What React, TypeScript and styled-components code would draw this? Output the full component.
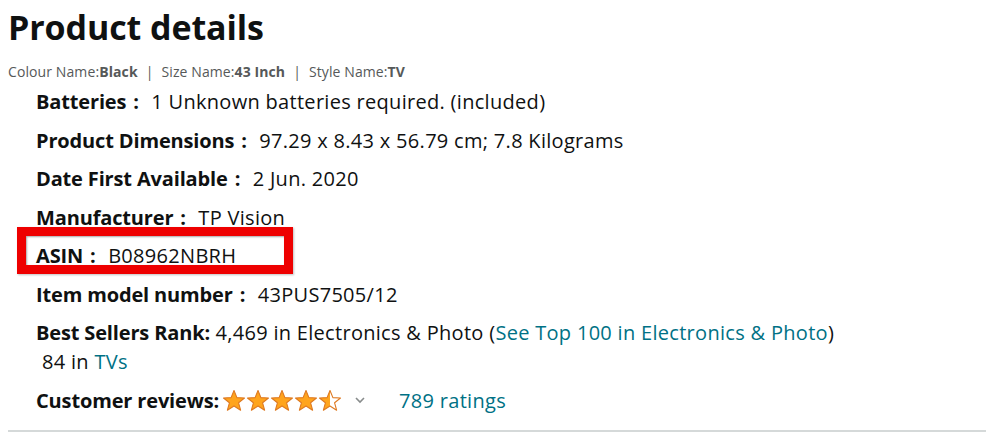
import React from "react";
import styled, { createGlobalStyle } from "styled-components";

const Global = createGlobalStyle`
  html, body { margin: 0; padding: 0; background: #fff; }
  body { font-family: "Open Sans", "Noto Sans", Arial, sans-serif; color: #0f1111; }
`;

const Page = styled.div`
  padding: 4px 0 0 8px;
  display: flex;
  flex-direction: column;
`;

const Title = styled.h2`
  margin: 0;
  font-size: 34px;
  font-weight: 700;
  line-height: 47px;
  color: #0f1111;
  letter-spacing: -0.1px;
`;

const Variants = styled.div`
  margin-top: 12px;
  font-size: 14px;
  color: #565959;
  line-height: 18px;
  letter-spacing: 0.1px;
`;

const Strong = styled.b`
  font-weight: 700;
`;

const Sep = styled.span`
  padding: 0 8px;
`;

const List = styled.ul`
  list-style: none;
  margin: 6px 0 0 0;
  padding: 0 0 0 28px;
  display: flex;
  flex-direction: column;
  gap: 9.5px;
`;

const Item = styled.li`
  position: relative;
  font-size: 20px;
  line-height: 29px;
  letter-spacing: 0.3px;
  color: #0f1111;
`;

const Label = styled.span`
  font-weight: 700;
  letter-spacing: -0.15px;
`;

const Colon = styled.span`
  font-weight: 700;
  padding: 0 12px 0 7px;
`;

const Highlight = styled.span`
  position: absolute;
  left: -19px;
  top: -14px;
  width: 276px;
  height: 47px;
  box-sizing: border-box;
  border: 9px solid #ee0000;
  box-shadow: inset 1px 1px 2px rgba(0, 0, 0, 0.35), 1px 1px 2px rgba(0, 0, 0, 0.25);
  pointer-events: none;
`;

const Link = styled.a`
  color: #007185;
  text-decoration: none;
`;

const SubLine = styled.div`
  padding-left: 6px;
`;

const Reviews = styled(Item)`
  display: flex;
  align-items: center;
`;

const Stars = styled.span`
  display: inline-flex;
  margin-left: 3px;
`;

const Chevron = styled.span`
  display: inline-flex;
  margin: 0 33px 0 12px;
`;

const Rule = styled.hr`
  margin: 15px 0 0 0;
  border: none;
  border-top: 2px solid #d5d9d9;
`;

const Star = ({ fill }: { fill: "full" | "half" }) => (
  <svg width="24" height="23" viewBox="0 0 24 23">
    <defs>
      <linearGradient id={`h${fill}`} x1="0" x2="1" y1="0" y2="0">
        <stop offset={fill === "full" ? "1" : "0.5"} stopColor="#ffa41c" />
        <stop offset={fill === "full" ? "1" : "0.5"} stopColor="#ffffff" />
      </linearGradient>
    </defs>
    <polygon
      points="12,1.5 14.9,8.6 22.5,9 16.6,13.8 18.6,21.2 12,17 5.4,21.2 7.4,13.8 1.5,9 9.1,8.6"
      fill={`url(#h${fill})`}
      stroke="#de7921"
      strokeWidth="1.1"
      strokeLinejoin="round"
    />
  </svg>
);

export default function App() {
  return (
    <>
      <Global />
      <Page>
        <Title>Product details</Title>
        <Variants>
          Colour Name:<Strong>Black</Strong>
          <Sep>|</Sep>
          Size Name:<Strong>43 Inch</Strong>
          <Sep>|</Sep>
          Style Name:<Strong>TV</Strong>
        </Variants>
        <List>
          <Item>
            <Label>Batteries</Label><Colon>:</Colon>1 Unknown batteries required. (included)
          </Item>
          <Item>
            <Label>Product Dimensions</Label><Colon>:</Colon>97.29 x 8.43 x 56.79 cm; 7.8 Kilograms
          </Item>
          <Item>
            <Label>Date First Available</Label><Colon>:</Colon>2 Jun. 2020
          </Item>
          <Item>
            <Label>Manufacturer</Label><Colon>:</Colon>TP Vision
          </Item>
          <Item>
            <Label>ASIN</Label><Colon>:</Colon>B08962NBRH
            <Highlight />
          </Item>
          <Item>
            <Label>Item model number</Label><Colon>:</Colon>43PUS7505/12
          </Item>
          <Item>
            <Label>Best Sellers Rank:</Label> 4,469 in Electronics &amp; Photo (
            <Link href="#">See Top 100 in Electronics &amp; Photo</Link>)
            <SubLine>
              84 in <Link href="#">TVs</Link>
            </SubLine>
          </Item>
          <Reviews>
            <Label>Customer reviews:</Label>
            <Stars>
              <Star fill="full" />
              <Star fill="full" />
              <Star fill="full" />
              <Star fill="full" />
              <Star fill="half" />
            </Stars>
            <Chevron>
              <svg width="12" height="8" viewBox="0 0 12 8">
                <path d="M2 2 L6 6 L10 2" fill="none" stroke="#888c8c" strokeWidth="1.6" />
              </svg>
            </Chevron>
            <Link href="#">789 ratings</Link>
          </Reviews>
        </List>
        <Rule />
      </Page>
    </>
  );
}
